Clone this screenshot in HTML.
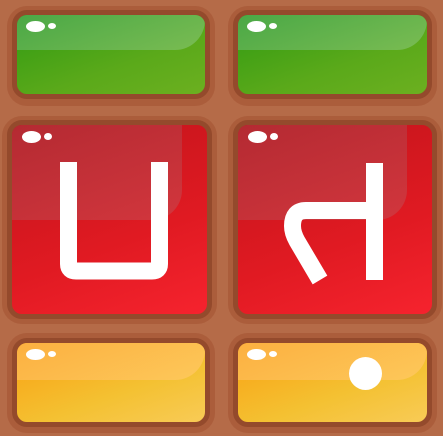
<!DOCTYPE html><html><head><style>
html,body{margin:0;padding:0}
body{width:443px;height:436px;background:#b56b48;position:relative;overflow:hidden}
.o{position:absolute;border-radius:20px;background:#ab5d3b}
.t{position:absolute;border-radius:15px;border:5px solid #944a2c;overflow:hidden;box-sizing:content-box}
.g{background:linear-gradient(160deg,#2f9a12,#5aa91a 60%,#6cb020)}
.g .h{background:linear-gradient(160deg,#4aa846,#7abc52)}
.r{background:linear-gradient(160deg,#c0141b,#e01a22 60%,#f6232e)}
.r .h{background:linear-gradient(160deg,#b42a32,#d2363d)}
.y{background:linear-gradient(160deg,#f9a012,#f4c132 60%,#f8cb56)}
.y .h{background:linear-gradient(160deg,#fcb040,#fdc85a)}
.h{position:absolute;left:0;top:0;right:0;border-bottom-right-radius:30px}
.e1,.e2{position:absolute;background:#fff;border-radius:50%}
</style></head><body>
<div class="o" style="left:7px;top:6px;width:208px;height:100px"></div>
<div class="o" style="left:228px;top:6px;width:209px;height:100px"></div>
<div class="o" style="left:2px;top:116px;width:215px;height:208px"></div>
<div class="o" style="left:228px;top:116px;width:214px;height:208px"></div>
<div class="o" style="left:7px;top:333px;width:208px;height:100px"></div>
<div class="o" style="left:228px;top:333px;width:209px;height:100px"></div>

<div class="t g" style="left:12px;top:10px;width:188px;height:79px"><div class="h" style="height:35px"></div><div class="e1" style="left:9px;top:6px;width:19px;height:11px"></div><div class="e2" style="left:31px;top:8px;width:8px;height:6px"></div></div>
<div class="t g" style="left:233px;top:10px;width:189px;height:79px"><div class="h" style="height:35px"></div><div class="e1" style="left:9px;top:6px;width:19px;height:11px"></div><div class="e2" style="left:31px;top:8px;width:8px;height:6px"></div></div>

<div class="t r" style="left:7px;top:120px;width:195px;height:189px"><div class="h" style="height:95px;right:25px"></div><div class="e1" style="left:10px;top:6px;width:19px;height:12px"></div><div class="e2" style="left:32px;top:8px;width:8px;height:7px"></div></div>
<div class="t r" style="left:233px;top:120px;width:194px;height:189px"><div class="h" style="height:95px;right:25px"></div><div class="e1" style="left:10px;top:6px;width:19px;height:12px"></div><div class="e2" style="left:32px;top:8px;width:8px;height:7px"></div></div>

<div class="t y" style="left:12px;top:338px;width:188px;height:79px"><div class="h" style="height:37px"></div><div class="e1" style="left:9px;top:6px;width:19px;height:11px"></div><div class="e2" style="left:31px;top:8px;width:8px;height:6px"></div></div>
<div class="t y" style="left:233px;top:338px;width:189px;height:79px"><div class="h" style="height:37px"></div><div class="e1" style="left:9px;top:6px;width:19px;height:11px"></div><div class="e2" style="left:31px;top:8px;width:8px;height:6px"></div><div class="e1" style="left:111px;top:14px;width:33px;height:33px"></div></div>

<svg style="position:absolute;left:0;top:0" width="443" height="436">
<path d="M68.5 162 V264 Q68.5 271 76 271 H152 Q159.5 271 159.5 264 V162" fill="none" stroke="#fff" stroke-width="17"/>
<path d="M374.5 163 V280 M374.5 210.5 H306 Q292.5 210.5 292.5 226 Q292.5 233 297 241 L320 280" fill="none" stroke="#fff" stroke-width="17"/>
</svg>
</body></html>
